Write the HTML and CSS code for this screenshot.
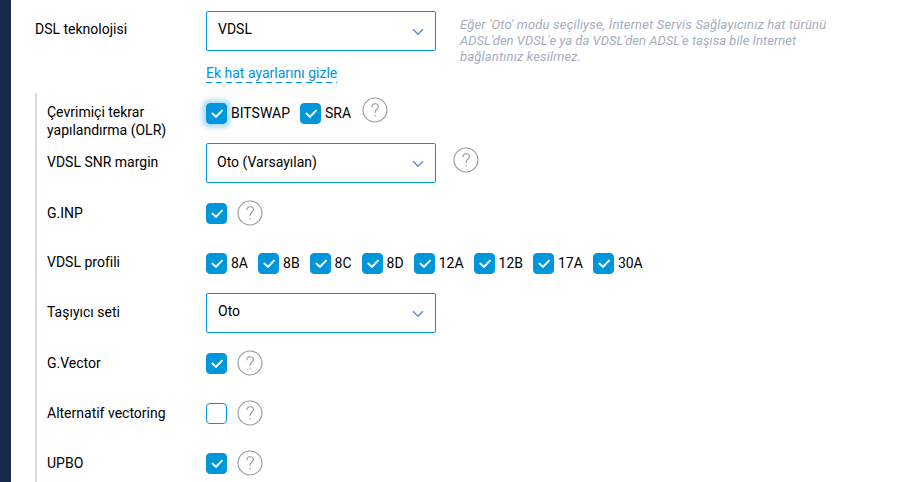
FILE: index.html
```
<!DOCTYPE html>
<html lang="tr">
<head>
    <meta charset="UTF-8">
    <meta name="viewport" content="width=device-width, initial-scale=1.0">
    <title>DSL</title>
    <link rel="stylesheet" href="styles.css">
</head>
<body>
    <svg class="symbols">
        <symbol id="arrow" viewBox="0 0 12 8"><path d="M1 1.2 L6 6.3 L11 1.2" /></symbol>
        <symbol id="help" viewBox="0 0 26 26">
            <circle cx="13" cy="13" r="12" />
            <path d="M9.9 10.2 C9.9 8 11.2 6.8 13.1 6.8 C15 6.8 16.4 8 16.4 9.8 C16.4 12.3 13.1 12.3 13.1 15 V16" />
            <path d="M13.1 17.8 V19.4" />
        </symbol>
    </svg>
    <div class="sidebar"></div>
    <div class="content">
        <div class="row main-row">
            <div class="label">DSL teknolojisi</div>
            <div class="select"><span>VDSL</span><svg class="arrow"><use href="#arrow" /></svg></div>
            <div class="hint">Eğer 'Oto' modu seçiliyse, İnternet Servis Sağlayıcınız hat türünü <span class="tight">ADSL'den VDSL'e ya da VDSL'den ADSL'e taşısa bile İnternet</span> bağlantınız kesilmez.</div>
        </div>
        <div class="link-row"><a class="link">Ek hat ayarlarını gizle</a></div>

        <div class="sub">
            <div class="row">
                <div class="label olr">Çevrimiçi tekrar yapılandırma (OLR)</div>
                <label class="check"><input type="checkbox" class="focused" checked><span>BITSWAP</span></label>
                <label class="check"><input type="checkbox" checked><span>SRA</span></label>
                <svg class="help help-olr"><use href="#help" /></svg>
            </div>
            <div class="row">
                <div class="label raised">VDSL SNR margin</div>
                <div class="select snr"><span>Oto (Varsayılan)</span><svg class="arrow"><use href="#arrow" /></svg></div>
                <svg class="help help-select"><use href="#help" /></svg>
            </div>
            <div class="row">
                <div class="label">G.INP</div>
                <label class="check"><input type="checkbox" checked></label>
                <svg class="help"><use href="#help" /></svg>
            </div>
            <div class="row">
                <div class="label raised">VDSL profili</div>
                <label class="check"><input type="checkbox" checked><span>8A</span></label>
                <label class="check"><input type="checkbox" checked><span>8B</span></label>
                <label class="check"><input type="checkbox" checked><span>8C</span></label>
                <label class="check"><input type="checkbox" checked><span>8D</span></label>
                <label class="check"><input type="checkbox" checked><span>12A</span></label>
                <label class="check"><input type="checkbox" checked><span>12B</span></label>
                <label class="check"><input type="checkbox" checked><span>17A</span></label>
                <label class="check"><input type="checkbox" checked><span>30A</span></label>
            </div>
            <div class="row">
                <div class="label raised">Taşıyıcı seti</div>
                <div class="select"><span>Oto</span><svg class="arrow"><use href="#arrow" /></svg></div>
            </div>
            <div class="row">
                <div class="label">G.Vector</div>
                <label class="check"><input type="checkbox" checked></label>
                <svg class="help"><use href="#help" /></svg>
            </div>
            <div class="row">
                <div class="label">Alternatif vectoring</div>
                <label class="check"><input type="checkbox"></label>
                <svg class="help"><use href="#help" /></svg>
            </div>
            <div class="row">
                <div class="label">UPBO</div>
                <label class="check"><input type="checkbox" checked></label>
                <svg class="help"><use href="#help" /></svg>
            </div>
        </div>
    </div>
</body>
</html>
```
FILE: styles.css
```
* {
    box-sizing: border-box;
}
body {
    display: flex;
    height: 100vh;
    margin: 0;
    overflow: hidden;
    background: #fff;
    color: #000;
    font-family: Roboto, Arial, sans-serif;
    font-size: 14px;
    line-height: 18px;
}
.symbols {
    display: none;
}
.sidebar {
    flex: none;
    width: 11px;
    background: #192b4b;
}
.content {
    flex: 1;
    padding: 11px 0 0 24px;
}
.row {
    display: flex;
    align-items: center;
    height: 40px;
    margin-bottom: 10px;
}
.label {
    flex: none;
    width: 159px;
    padding-right: 30px;
}
.main-row .label {
    width: 171px;
    padding-bottom: 4px;
}
.raised {
    padding-bottom: 2px;
}
.olr {
    padding-top: 15px;
}
.select {
    display: flex;
    flex: none;
    justify-content: space-between;
    align-items: center;
    width: 230px;
    height: 40px;
    padding: 0 11px 4px;
    border: 1px solid #0096dc;
    border-radius: 2px;
}
.snr {
    padding: 0 11px 2px 10px;
}
.arrow {
    width: 12px;
    height: 8px;
    margin-top: 5px;
    fill: none;
    stroke: #5c93cf;
    stroke-width: 1.5;
}
.snr .arrow {
    margin-top: 3px;
}
.hint {
    align-self: flex-start;
    width: 375px;
    margin-left: 24px;
    padding-top: 6px;
    color: #a5adbb;
    font-size: 13px;
    font-style: italic;
    line-height: 16px;
    letter-spacing: 0.17px;
}
.tight {
    letter-spacing: 0.03px;
}
.link-row {
    height: 32px;
    padding: 3px 0 0 171px;
}
.link {
    display: inline-block;
    height: 19px;
    color: #0096dc;
    background: repeating-linear-gradient(90deg, #0096dc 0 6px, transparent 6px 10px) bottom / 100% 1px no-repeat;
}
.sub {
    padding-left: 10px;
    border-left: 2px solid #d5dae5;
}
.check {
    display: flex;
    align-items: center;
    margin: 1px 10px 0 0;
}
.check span {
    padding-bottom: 2px;
}
.check input {
    appearance: none;
    width: 21px;
    height: 21px;
    margin: 0 4px 0 0;
    border: 1px solid #0096dc;
    border-radius: 4px;
}
.check input:checked {
    background: #0096dc url("data:image/svg+xml,%3Csvg xmlns='http://www.w3.org/2000/svg' viewBox='0 0 21 21'%3E%3Cpath d='M6.4 10.6 L10 13.9 L16 7.6' fill='none' stroke='white' stroke-width='2' stroke-linecap='round'/%3E%3C/svg%3E") center / 21px 21px no-repeat;
}
.check .focused {
    box-shadow: 0 0 4px 4px #b3e0f5;
}
.help {
    flex: none;
    width: 26px;
    height: 26px;
    margin-left: -4px;
    fill: none;
    stroke: #999;
    stroke-width: 1.1;
}
.help-olr {
    margin: -6px 0 0 1px;
}
.help-select {
    margin: -6px 0 0 17px;
}
```
